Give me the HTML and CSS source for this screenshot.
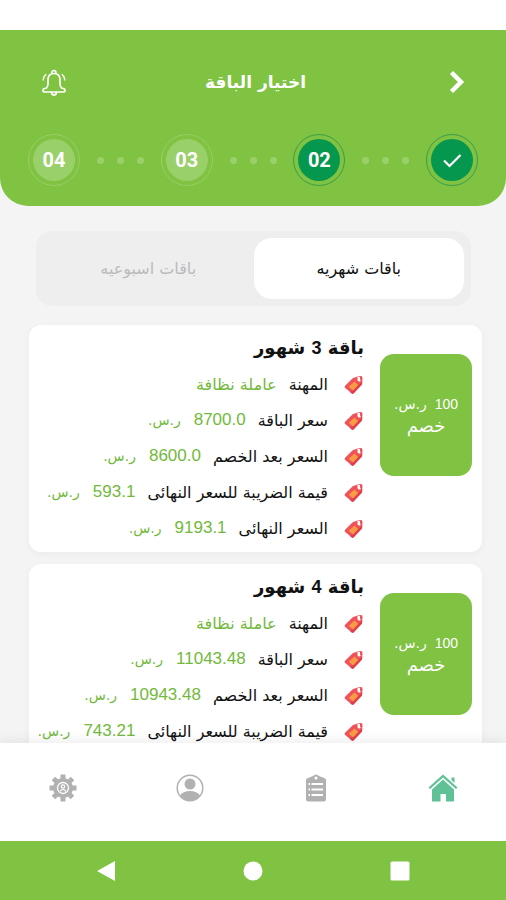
FILE: index.html
```html
<!DOCTYPE html>
<html lang="ar" dir="rtl">
<head>
    <meta charset="UTF-8">
    <meta name="viewport" content="width=device-width, initial-scale=1.0">
    <title>اختيار الباقة</title>
    <link rel="stylesheet" href="styles.css">
</head>
<body>

<svg class="sprite" aria-hidden="true">
    <symbol id="tag" viewBox="0 0 20 20">
        <path d="M9 4 L14 2.500 L17 2 Q18.500 2.200 18.500 4 L18 10.500 L9.500 19.500 Q8.500 20.300 7.500 19.300 L1 13.800 Q.2 12.800 1.100 11.800 Z" fill="#f0525a"/>
        <path d="M18.300 7.500 L18 10.500 L9.500 19.500 Q8.500 20.300 7.500 19.300 L6 18 Z" fill="#df3f4d"/>
        <path d="M10.500 7.500 L14.200 11 L9 16.500 L4.800 12.700 Z" fill="#f99a45"/>
        <path d="M13.500 3 H16 V5.500 Q17.500 6.500 16 7.500 Q14 8 13.500 6 Z" fill="#fff"/>
    </symbol>
</svg>

<div class="status-bar"></div>

<header class="header">
    <div class="title-row">
        <button class="icon-button" aria-label="رجوع">
            <svg width="26" height="26" viewBox="0 0 26 26"><path d="M7.500 3.500 L17 13 L7.500 22.500" fill="none" stroke="#fff" stroke-width="4.500"/></svg>
        </button>
        <h1>اختيار الباقة</h1>
        <button class="icon-button" aria-label="الإشعارات">
            <svg width="26" height="28" viewBox="0 0 26 28" fill="none" stroke="#fff" stroke-width="1.700" stroke-linecap="round" stroke-linejoin="round">
                <path d="M5.500 20 Q7 18.500 7 15.500 V12 Q7 5.500 13 5.500 Q19 5.500 19 12 V15.500 Q19 18.500 20.500 20 Q24.500 20.500 24 23 Q23.800 24 22.500 24 H3.500 Q2.200 24 2 23 Q1.500 20.500 5.500 20 Z"/>
                <path d="M11 5.500 Q10.800 2.500 13 2.500 Q15.200 2.500 15 5.500"/>
                <path d="M10.500 24.500 Q11 27 13 27 Q15 27 15.500 24.500"/>
                <path d="M4.800 6.500 Q2.500 8.500 2.200 12 M21.200 6.500 Q23.500 8.500 23.800 12" stroke-width="1.300"/>
            </svg>
        </button>
    </div>
    <div class="steps">
        <div class="step done">
            <span>
                <svg width="22" height="22" viewBox="0 0 22 22"><path d="M3 11.500 L8.500 17 L19.500 6" fill="none" stroke="#fff" stroke-width="2.200"/></svg>
            </span>
        </div>
        <div class="dots"><i></i><i></i><i></i></div>
        <div class="step done"><span>02</span></div>
        <div class="dots"><i></i><i></i><i></i></div>
        <div class="step"><span>03</span></div>
        <div class="dots"><i></i><i></i><i></i></div>
        <div class="step"><span>04</span></div>
    </div>
</header>

<main class="content">
    <div class="tabs">
        <button class="tab active">باقات شهريه</button>
        <button class="tab">باقات اسبوعيه</button>
    </div>

    <article class="card">
        <div class="discount">
            <p class="price"><span class="num">100</span><span>ر.س.</span></p>
            <p class="discount-label">خصم</p>
        </div>
        <div class="details">
            <h2>باقة <span class="num">3</span> شهور</h2>
            <ul>
                <li><svg class="tag"><use href="#tag"/></svg><span>المهنة</span><span class="value">عاملة نظافة</span></li>
                <li><svg class="tag"><use href="#tag"/></svg><span>سعر الباقة</span><span class="value price"><span class="num">8700.0</span><span>ر.س.</span></span></li>
                <li><svg class="tag"><use href="#tag"/></svg><span>السعر بعد الخصم</span><span class="value price"><span class="num">8600.0</span><span>ر.س.</span></span></li>
                <li><svg class="tag"><use href="#tag"/></svg><span>قيمة الضريبة للسعر النهائى</span><span class="value price"><span class="num">593.1</span><span>ر.س.</span></span></li>
                <li><svg class="tag"><use href="#tag"/></svg><span>السعر النهائى</span><span class="value price"><span class="num">9193.1</span><span>ر.س.</span></span></li>
            </ul>
        </div>
    </article>

    <article class="card">
        <div class="discount">
            <p class="price"><span class="num">100</span><span>ر.س.</span></p>
            <p class="discount-label">خصم</p>
        </div>
        <div class="details">
            <h2>باقة <span class="num">4</span> شهور</h2>
            <ul>
                <li><svg class="tag"><use href="#tag"/></svg><span>المهنة</span><span class="value">عاملة نظافة</span></li>
                <li><svg class="tag"><use href="#tag"/></svg><span>سعر الباقة</span><span class="value price"><span class="num">11043.48</span><span>ر.س.</span></span></li>
                <li><svg class="tag"><use href="#tag"/></svg><span>السعر بعد الخصم</span><span class="value price"><span class="num">10943.48</span><span>ر.س.</span></span></li>
                <li><svg class="tag"><use href="#tag"/></svg><span>قيمة الضريبة للسعر النهائى</span><span class="value price"><span class="num">743.21</span><span>ر.س.</span></span></li>
            </ul>
        </div>
    </article>
</main>

<nav class="bottom-nav">
    <a href="#" class="current" aria-label="الرئيسية">
        <svg width="30" height="28" viewBox="0 0 30 28" fill="currentColor">
            <path d="M.5 13.500 L15 .5 L29.500 13.500 L28 15 L15 3.500 L2 15 Z"/>
            <path d="M4 15.500 L15 5.500 L26 15.500 V27.500 H18 V20 H12.500 V27.500 H4 Z"/>
            <path d="M23.500 3.500 H26.500 V9 L23.500 6.300 Z"/>
        </svg>
    </a>
    <a href="#" aria-label="الطلبات">
        <svg width="20" height="28" viewBox="0 0 20 28">
            <path d="M2 4 L7 2 Q8 .5 10 .5 Q12 .5 13 2 L18 4 Q20 4.500 20 6 V25.500 Q20 27.500 18 27.500 H2 Q0 27.500 0 25.500 V6 Q0 4.500 2 4 Z" fill="currentColor"/>
            <circle cx="10" cy="4" r="1.500" fill="#fff"/>
            <path d="M2.500 10 H4 M5.500 10 H17 M2.500 15.500 H4 M5.500 15.500 H17 M2.500 21 H4 M5.500 21 H17" stroke="#fff" stroke-width="2"/>
        </svg>
    </a>
    <a href="#" aria-label="الحساب">
        <svg width="28" height="28" viewBox="0 0 28 28">
            <circle cx="14" cy="14" r="12.800" fill="none" stroke="currentColor" stroke-width="1.500"/>
            <circle cx="14" cy="10" r="5.500" fill="currentColor"/>
            <path d="M4 21.500 Q7 17 14 17 Q21 17 24 21.500 Q20 26.500 14 26.500 Q8 26.500 4 21.500 Z" fill="currentColor"/>
        </svg>
    </a>
    <a href="#" aria-label="الإعدادات">
        <svg width="28" height="28" viewBox="0 0 28 28">
            <g stroke="currentColor" stroke-width="5">
                <path d="M14 .5 V27.500 M.5 14 H27.500 M4.500 4.500 L23.500 23.500 M23.500 4.500 L4.500 23.500"/>
            </g>
            <circle cx="14" cy="14" r="10" fill="currentColor"/>
            <circle cx="14" cy="14" r="5.500" fill="none" stroke="#fff" stroke-width="1.300"/>
            <circle cx="14" cy="12.500" r="1.700" fill="none" stroke="#fff" stroke-width="1.200"/>
            <path d="M11 17.500 Q14 13.500 17 17.500" fill="none" stroke="#fff" stroke-width="1.200"/>
        </svg>
    </a>
</nav>

<div class="system-bar">
    <button aria-label="Back"><svg width="20" height="22" viewBox="0 0 20 22"><path d="M19 1 V21 L1 11 Z" fill="#fff"/></svg></button>
    <button aria-label="Home"><svg width="20" height="20" viewBox="0 0 20 20"><circle cx="10" cy="10" r="9.500" fill="#fff"/></svg></button>
    <button aria-label="Recent"><svg width="20" height="20" viewBox="0 0 20 20"><rect x=".5" y=".5" width="19" height="19" rx="1.500" fill="#fff"/></svg></button>
</div>

</body>
</html>
```
FILE: styles.css
```css
* {
    box-sizing: border-box;
}

body {
    margin: 0;
    height: 100vh;
    display: flex;
    flex-direction: column;
    overflow: hidden;
    background-color: #f4f4f4;
    color: #111;
    font-family: "DejaVu Sans", sans-serif;
    font-size: 16px;
}

h1, h2, p, ul {
    margin: 0;
    padding: 0;
}

button {
    border: none;
    padding: 0;
    background: none;
    font-family: inherit;
    cursor: pointer;
}

svg {
    display: block;
}

.sprite {
    position: absolute;
    width: 0;
    height: 0;
}

.status-bar {
    flex: none;
    height: 30px;
    background-color: #fff;
}

/* Header */
.header {
    flex: none;
    padding: 32px 28px 20px;
    background-color: #80c242;
    border-radius: 0 0 28px 28px;
    color: #fff;
}

.title-row {
    display: flex;
    align-items: center;
    justify-content: space-between;
    height: 40px;
    padding: 0 8px 0 13px;
    margin-bottom: 32px;
}

h1 {
    font-size: 17px;
    line-height: 40px;
}

.steps {
    display: flex;
    align-items: center;
    justify-content: space-between;
}

.step {
    padding: 4px;
    border: 1px solid #97cf64;
    border-radius: 50%;
}

.step span {
    display: flex;
    align-items: center;
    justify-content: center;
    width: 42px;
    height: 42px;
    border-radius: 50%;
    background-color: #9ad069;
    font-family: Roboto, sans-serif;
    font-size: 20px;
    font-weight: bold;
}

.step.done {
    border-color: #3b9e4a;
}

.step.done span {
    background-color: #06974f;
}

.dots {
    display: flex;
    gap: 13px;
}

.dots i {
    width: 7px;
    height: 7px;
    border-radius: 50%;
    background-color: #9ad069;
}

/* Packages */
.content {
    flex: 1;
    min-height: 0;
    overflow: hidden;
    padding: 25px 24px 0 29px;
}

.tabs {
    display: flex;
    margin: 0 11px 19px 7px;
    padding: 7px;
    background-color: #eee;
    border-radius: 16px;
}

.tab {
    flex: 1;
    height: 61px;
    border-radius: 18px;
    color: #bbb;
    font-size: 16px;
}

.tab.active {
    background-color: #fff;
    color: #111;
}

.card {
    display: flex;
    align-items: flex-start;
    gap: 16px;
    margin-bottom: 12px;
    padding: 5px 10px 6px;
    background-color: #fff;
    border-radius: 12px;
    box-shadow: 0 2px 8px rgba(0, 0, 0, 0.04);
}

.discount {
    flex: none;
    display: flex;
    flex-direction: column;
    align-items: center;
    justify-content: center;
    width: 92px;
    height: 122px;
    margin-top: 24px;
    background-color: #80c242;
    border-radius: 14px;
    color: #fff;
    font-size: 14px;
    line-height: 22px;
}

.discount-label {
    font-size: 18px;
}

.price {
    display: flex;
    gap: 8px;
}

.num {
    font-family: "Liberation Sans", sans-serif;
}

.details {
    flex: 1;
    min-width: 0;
}

h2 {
    font-size: 18px;
    line-height: 36px;
}

ul {
    list-style-type: none;
}

li {
    display: flex;
    align-items: center;
    gap: 12px;
    height: 36px;
    white-space: nowrap;
}

.tag {
    flex: none;
    width: 20px;
    height: 20px;
    margin-left: 4px;
}

.value {
    color: #72b93b;
}

.value.price {
    align-items: center;
    gap: 13px;
    font-size: 14px;
}

.value .num {
    font-size: 17px;
}

.discount .num {
    font-size: 14px;
}

/* Bottom bars */
.bottom-nav {
    flex: none;
    display: flex;
    align-items: center;
    height: 98px;
    padding-bottom: 8px;
    background-color: #fff;
    box-shadow: 0 -2px 12px rgba(0, 0, 0, 0.08);
}

.bottom-nav a {
    flex: 1;
    display: flex;
    justify-content: center;
    color: #b1b1b1;
}

.bottom-nav a.current {
    color: #60c096;
}

.system-bar {
    flex: none;
    display: flex;
    align-items: center;
    direction: ltr;
    height: 59px;
    padding: 0 32px;
    background-color: #80c242;
}

.system-bar button {
    flex: 1;
    display: flex;
    justify-content: center;
}
```
